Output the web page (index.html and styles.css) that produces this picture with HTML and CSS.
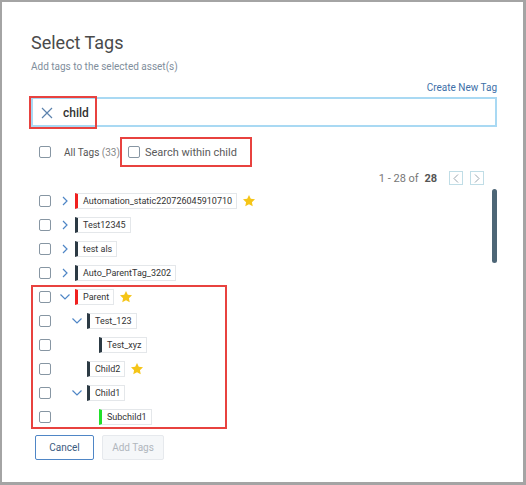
FILE: index.html
```html
<!DOCTYPE html>
<html>
<head>
<meta charset="utf-8">
<link rel="stylesheet" href="styles.css">
</head>
<body>
<div class="frame">
  <div class="dialog">
    <h1 class="title">Select Tags</h1>
    <p class="subtitle">Add tags to the selected asset(s)</p>
    <div class="create-row"><a class="create-link">Create New Tag</a></div>
    <div class="search">
      <div class="search-hl">
        <svg class="x-icon" width="12" height="12" viewBox="0 0 12 12"><path d="M1 1 L11 11 M11 1 L1 11" stroke="#5b82ad" stroke-width="1.2" fill="none"/></svg>
        <span class="search-text">child</span>
      </div>
    </div>
    <div class="filter-row">
      <span class="cb"></span>
      <span class="all-tags">All Tags <span class="count">(33)</span></span>
      <div class="within-hl">
        <span class="cb"></span>
        <span class="within-text">Search within child</span>
      </div>
    </div>
    <div class="pager">
      <span class="pager-text">1 - 28 of <b>28</b></span>
      <span class="pbtn"><svg width="6" height="9" viewBox="0 0 6 9"><path d="M5 0.5 L1 4.5 L5 8.5" stroke="#9aa4ad" fill="none" stroke-width="1"/></svg></span>
      <span class="pbtn"><svg width="6" height="9" viewBox="0 0 6 9"><path d="M1 0.5 L5 4.5 L1 8.5" stroke="#9aa4ad" fill="none" stroke-width="1"/></svg></span>
    </div>
    <div class="list-wrap">
      <div class="tree">
        <div class="row">
          <span class="cb"></span>
          <span class="chev"><svg width="6" height="10" viewBox="0 0 6 10"><path d="M1 1 L5 5 L1 9" stroke="#4f86c6" fill="none" stroke-width="1.2"/></svg></span>
          <span class="chip red">Automation_static220726045910710</span>
          <svg class="star" width="14" height="14" viewBox="0 0 24 24"><path d="M12 1.5l3.1 6.6 7.2.9-5.3 5 1.4 7.1L12 17.6l-6.4 3.5 1.4-7.1-5.3-5 7.2-.9z" fill="#f5c518"/></svg>
        </div>
        <div class="row">
          <span class="cb"></span>
          <span class="chev"><svg width="6" height="10" viewBox="0 0 6 10"><path d="M1 1 L5 5 L1 9" stroke="#4f86c6" fill="none" stroke-width="1.2"/></svg></span>
          <span class="chip dark">Test12345</span>
        </div>
        <div class="row">
          <span class="cb"></span>
          <span class="chev"><svg width="6" height="10" viewBox="0 0 6 10"><path d="M1 1 L5 5 L1 9" stroke="#4f86c6" fill="none" stroke-width="1.2"/></svg></span>
          <span class="chip dark">test als</span>
        </div>
        <div class="row">
          <span class="cb"></span>
          <span class="chev"><svg width="6" height="10" viewBox="0 0 6 10"><path d="M1 1 L5 5 L1 9" stroke="#4f86c6" fill="none" stroke-width="1.2"/></svg></span>
          <span class="chip dark">Auto_ParentTag_3202</span>
        </div>
        <div class="group">
          <div class="row">
            <span class="cb"></span>
            <span class="chev"><svg width="10" height="6" viewBox="0 0 10 6"><path d="M0.5 0.5 L5 5 L9.5 0.5" stroke="#4f86c6" fill="none" stroke-width="1.2"/></svg></span>
            <span class="chip red">Parent</span>
            <svg class="star" width="14" height="14" viewBox="0 0 24 24"><path d="M12 1.5l3.1 6.6 7.2.9-5.3 5 1.4 7.1L12 17.6l-6.4 3.5 1.4-7.1-5.3-5 7.2-.9z" fill="#f5c518"/></svg>
          </div>
          <div class="row l1">
            <span class="cb"></span>
            <span class="chev"><svg width="10" height="6" viewBox="0 0 10 6"><path d="M0.5 0.5 L5 5 L9.5 0.5" stroke="#4f86c6" fill="none" stroke-width="1.2"/></svg></span>
            <span class="chip dark">Test_123</span>
          </div>
          <div class="row l2">
            <span class="cb"></span>
            <span class="chev"></span>
            <span class="chip dark">Test_xyz</span>
          </div>
          <div class="row l1">
            <span class="cb"></span>
            <span class="chev"></span>
            <span class="chip dark">Child2</span>
            <svg class="star" width="14" height="14" viewBox="0 0 24 24"><path d="M12 1.5l3.1 6.6 7.2.9-5.3 5 1.4 7.1L12 17.6l-6.4 3.5 1.4-7.1-5.3-5 7.2-.9z" fill="#f5c518"/></svg>
          </div>
          <div class="row l1">
            <span class="cb"></span>
            <span class="chev"><svg width="10" height="6" viewBox="0 0 10 6"><path d="M0.5 0.5 L5 5 L9.5 0.5" stroke="#4f86c6" fill="none" stroke-width="1.2"/></svg></span>
            <span class="chip dark">Child1</span>
          </div>
          <div class="row l2">
            <span class="cb"></span>
            <span class="chev"></span>
            <span class="chip green">Subchild1</span>
          </div>
        </div>
      </div>
      <div class="scroll-track"><div class="scroll-thumb"></div></div>
    </div>
    <div class="actions">
      <button class="btn cancel">Cancel</button>
      <button class="btn add">Add Tags</button>
    </div>
  </div>
</div>
</body>
</html>
```
FILE: styles.css
```css
* { box-sizing: border-box; }
html, body { margin: 0; padding: 0; background: #fff; }
body { font-family: Roboto, "Noto Sans", Arial, sans-serif; }
.frame {
  width: 526px;
  height: 485px;
  border-top: 2px solid #a4a4a4;
  border-left: 2px solid #a4a4a4;
  border-right: 3px solid #a4a4a4;
  border-bottom: 3px solid #a4a4a4;
  background: #fff;
}
.dialog {
  padding: 30px 26px 0 29px;
  display: flex;
  flex-direction: column;
}
.title {
  margin: 0;
  font-size: 18px;
  line-height: 22px;
  font-weight: 400;
  color: #4a4a4a;
}
.subtitle {
  margin: 7px 0 0;
  font-size: 10px;
  line-height: 12px;
  color: #7f8e9c;
}
.create-row {
  display: flex;
  justify-content: flex-end;
  margin-top: 9px;
}
.create-link {
  font-size: 10px;
  line-height: 12px;
  color: #3d6fa8;
}
.search {
  margin-top: 3px;
  height: 30px;
  border: 2px solid #a9d9f3;
  position: relative;
}
.search-hl {
  position: absolute;
  left: -4px;
  top: -3px;
  width: 68px;
  height: 33px;
  border: 2px solid #e8423f;
  display: flex;
  align-items: center;
  padding-left: 10px;
  gap: 10px;
}
.x-icon { display: block; }
.search-text {
  font-size: 12px;
  font-weight: 500;
  color: #333;
}
.filter-row {
  display: flex;
  align-items: center;
  margin-top: 10px;
  height: 30px;
  padding-left: 8px;
}
.cb {
  width: 12px;
  height: 12px;
  border: 1.5px solid #8796a3;
  border-radius: 2px;
  flex: none;
  background: #fff;
}
.all-tags {
  margin-left: 13px;
  font-size: 10px;
  color: #555;
}
.count { color: #888; }
.within-hl {
  margin-left: 0;
  height: 30px;
  width: 132px;
  border: 2px solid #e8423f;
  display: flex;
  align-items: center;
  padding-left: 6px;
  gap: 5px;
}
.within-text {
  font-size: 11px;
  color: #5a5a5a;
}
.pager {
  display: flex;
  justify-content: flex-end;
  align-items: center;
  margin-top: 4px;
  height: 14px;
  padding-right: 13px;
}
.pager-text {
  font-size: 11px;
  color: #777;
  margin-right: 5px;
}
.pager-text b { color: #555; font-weight: 700; margin-left: 3px; }
.pbtn {
  width: 14px;
  height: 14px;
  border: 1px solid #c0dde6;
  display: flex;
  align-items: center;
  justify-content: center;
  margin-left: 7px;
}
.pbtn svg { display: block; }
.list-wrap {
  display: flex;
  margin-top: 4px;
}
.tree { flex: 1; }
.row {
  height: 24px;
  display: flex;
  align-items: center;
  padding-left: 8px;
}
.chev {
  width: 10px;
  margin-left: 9px;
  margin-right: 5px;
  display: flex;
  justify-content: center;
  align-items: center;
  flex: none;
}
.row.l1 .chev { margin-left: 21px; }
.row.l2 .chev { margin-left: 33px; }
.chev svg { display: block; }
.chip {
  height: 16px;
  line-height: 14px;
  font-size: 9px;
  color: #333;
  border: 1px solid #e4e7ea;
  border-left-width: 3px;
  padding: 0 4px 0 5px;
  background: #fff;
}
.chip.red { border-left-color: #f0201f; }
.chip.dark { border-left-color: #2c3a44; }
.chip.green { border-left-color: #22e02a; }
.star { margin-left: 5px; display: block; }
.group {
  width: 196px;
  box-shadow: inset 0 0 0 2px #e8423f;
}
.scroll-track {
  width: 5px;
  flex: none;
}
.scroll-thumb {
  width: 5px;
  height: 74px;
  background: #4d6676;
  border-radius: 3px;
}
.actions {
  display: flex;
  gap: 8px;
  margin-top: 6px;
  padding-left: 4px;
}
.btn {
  height: 25px;
  font-family: Roboto, sans-serif;
  font-size: 10px;
  border-radius: 2px;
  padding: 0;
}
.cancel {
  width: 59px;
  background: #fff;
  border: 1px solid #4f86c6;
  color: #3b5a80;
}
.add {
  width: 62px;
  background: #f5f7f9;
  border: 1px solid #e6e9ed;
  color: #b0b6bd;
}
```
